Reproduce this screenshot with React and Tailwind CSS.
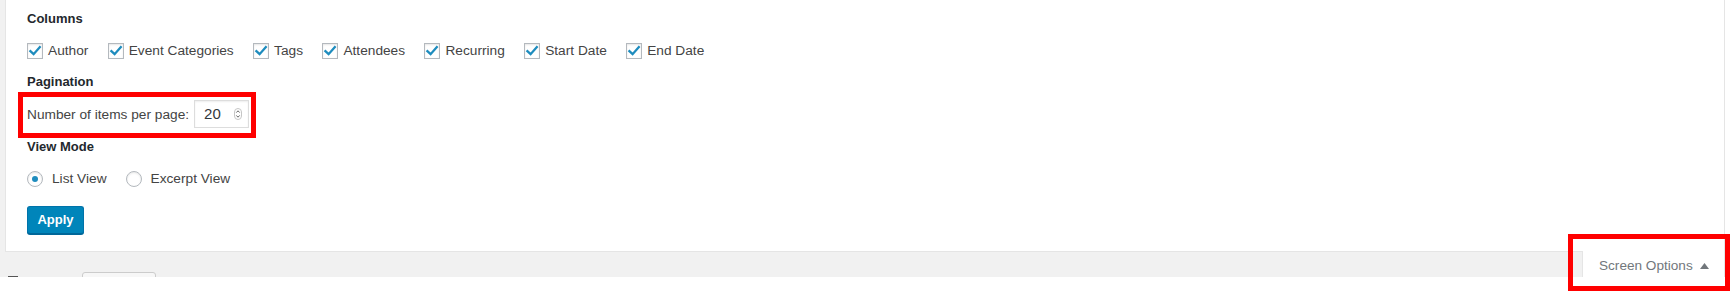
import React from "react";

const columns = [
  "Author",
  "Event Categories",
  "Tags",
  "Attendees",
  "Recurring",
  "Start Date",
  "End Date",
];

const Checkbox = () => (
  <span className="w-4 h-4 shrink-0 border border-[#b4b9be] bg-white shadow-[inset_0_1px_2px_rgba(0,0,0,0.1)] flex items-center justify-center">
    <svg width="14" height="14" viewBox="0 0 14 14">
      <path
        d="M2.4 7.2 L5.6 10.2 L11.8 3.2"
        fill="none"
        stroke="#1e8cbe"
        strokeWidth="2.3"
        strokeLinecap="square"
      />
    </svg>
  </span>
);

const Radio = ({ checked }) => (
  <span className="w-4 h-4 shrink-0 rounded-full border border-[#b4b9be] bg-white shadow-[inset_0_1px_2px_rgba(0,0,0,0.1)] flex items-center justify-center">
    {checked && <span className="w-[6px] h-[6px] rounded-full bg-[#1e8cbe]" />}
  </span>
);

const Heading = ({ children, className = "" }) => (
  <h5 className={`text-[13px] leading-[18px] font-bold text-[#23282d] ${className}`}>
    {children}
  </h5>
);

export default function App() {
  return (
    <div
      className="w-[1733px] h-[292px] bg-white relative"
      style={{ fontFamily: '"Liberation Sans", Arial, sans-serif' }}
    >
      <div className="w-[1725px] h-[277px] bg-[#f1f1f1] overflow-hidden flex flex-col">
        {/* Options panel */}
        <div className="ml-[5px] h-[252px] shrink-0 bg-white border-l border-r border-b border-[#e5e5e5] px-[21px] pt-[10px] text-[13.7px] text-[#444]">
          <Heading>Columns</Heading>
          <div className="mt-[15px] flex items-center h-4 gap-[19.4px]">
            {columns.map((c) => (
              <label key={c} className="flex items-center gap-[5px] leading-4">
                <Checkbox />
                <span>{c}</span>
              </label>
            ))}
          </div>

          <Heading className="mt-[14px]">Pagination</Heading>
          <div className="mt-[9px] flex items-center h-[28px] gap-[5px]">
            <span className="leading-[28px] pt-[2px]">Number of items per page:</span>
            <div className="w-[55px] h-[28px] border border-[#ddd] bg-white shadow-[inset_0_1px_2px_rgba(0,0,0,0.07)] flex items-center justify-between pl-[9px] pr-[6px]">
              <span className="text-[15px] text-[#32373c]">20</span>
              <svg width="8" height="12" viewBox="0 0 8 12">
                <rect x="0.5" y="0.5" width="7" height="11" rx="3.5" fill="none" stroke="#c5c5c5" />
                <path d="M2.3 4.6 L4 2.8 L5.7 4.6 M2.3 7.4 L4 9.2 L5.7 7.4" fill="none" stroke="#555" strokeWidth="0.9" />
              </svg>
            </div>
          </div>

          <Heading className="mt-[10px]">View Mode</Heading>
          <div className="mt-[15px] flex items-center h-4 gap-[19px]">
            <label className="flex items-center gap-[9px]">
              <Radio checked />
              <span>List View</span>
            </label>
            <label className="flex items-center gap-[9px]">
              <Radio />
              <span>Excerpt View</span>
            </label>
          </div>

          <button className="mt-[19px] w-[57px] h-[28px] rounded-[3px] bg-[#0085ba] border border-[#0073aa] border-b-[#006799] shadow-[0_1px_0_#006799] text-white text-[13px] font-bold flex items-center justify-center">
            Apply
          </button>
        </div>

        {/* Bottom strip with Screen Options tab */}
        <div className="flex flex-1">
          <div className="flex-1 flex items-start pt-[20px]">
            <span className="ml-[8px] mt-[4px] w-[10px] h-[10px] border-t-2 border-[#555]" />
            <span className="ml-[64px] w-[74px] h-[20px] rounded-[3px] border border-[#ccc] bg-[#f7f7f7]" />
          </div>
          <div className="-mt-px w-[143px] bg-white border-l border-r border-[#e5e5e5] flex items-start pt-[6px] pl-[16px] gap-[7px] text-[13.6px] text-[#72777c]">
            <span className="leading-[18px]">Screen Options</span>
            <svg width="9" height="6" viewBox="0 0 9 6" className="mt-[6px]">
              <path d="M0 6 L4.5 0 L9 6 Z" fill="#72777c" />
            </svg>
          </div>
        </div>
      </div>

      {/* Red annotation boxes */}
      <div className="absolute left-[18px] top-[92px] w-[238px] h-[46px] border-[5px] border-[#ff0000]" />
      <div className="absolute left-[1568px] top-[234px] w-[162px] h-[57px] border-[5px] border-[#ff0000]" />
    </div>
  );
}
